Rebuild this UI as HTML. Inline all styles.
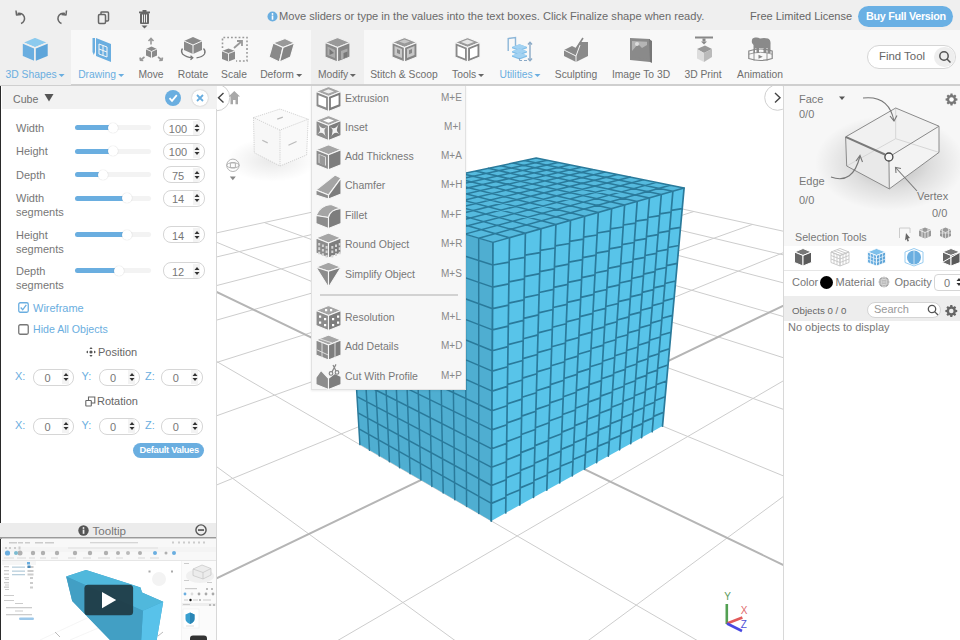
<!DOCTYPE html>
<html><head><meta charset="utf-8">
<style>
*{box-sizing:border-box;margin:0;padding:0}
html,body{width:960px;height:640px;overflow:hidden;background:#fff;font-family:"Liberation Sans",sans-serif;color:#666}
.a{position:absolute}
#top{left:0;top:0;width:960px;height:30px;background:#efefef}
#tb{left:0;top:30px;width:960px;height:56px;background:#f8f8f8;border-bottom:2px solid #cfcfcf}
.lbl{position:absolute;top:39px;font-size:10.3px;color:#6e6e6e;white-space:nowrap;transform:translateX(-50%)}
.blue{color:#6aaee0}
.car{display:inline-block;width:0;height:0;border-left:3px solid transparent;border-right:3px solid transparent;border-top:3px solid #6aaee0;vertical-align:middle;margin-left:-1px}
.car.g{border-top-color:#666}
#lp{left:0;top:86px;width:217px;height:554px;background:#fff;border-right:1px solid #d8d8d8;border-left:1.5px solid #2a2a2a}
.pl{font-size:10.6px;color:#777}
.nv{font-size:10.5px;color:#555}
.xyz{font-size:14.5px;margin-top:-1px}
.blue.t{color:#6aaee0}
.rpt{font-size:11px;color:#a2a2a2}
#vp{left:217px;top:86px;width:566px;height:554px;background:#fff;overflow:hidden}
#rp{left:783px;top:86px;width:177px;height:554px;background:#fff;border-left:1px solid #d8d8d8}
.t{position:absolute;white-space:nowrap;font-size:11px;color:#777}
.sl{position:absolute;height:4px;background:#eee;border-radius:2px}
.sl i{position:absolute;left:0;top:0;height:4px;background:#6aaee0;border-radius:2px}
.sl b{position:absolute;top:-4px;width:12px;height:12px;border-radius:6px;background:#fff;box-shadow:0 0 2px #bbb}
.num{position:absolute;height:17px;border:1px solid #d6d6d6;border-radius:8px;background:#fff;font-size:11px;color:#555}
.num span{position:absolute;top:2px}
.sp{position:absolute;right:3px;top:2px;width:8px;height:11px}
.menu{left:311px;top:85px;width:154px;height:305px;background:#f6f6f6;border:1px solid #ddd;border-top:none}
.mi{font-size:10.5px;color:#777}
.mk{font-size:10px;color:#888}
</style></head><body>
<div id="top" class="a">
<svg class="a" style="left:0;top:1px" width="170" height="32" viewBox="0 0 170 32" fill="none" stroke="#666" stroke-width="1.5">
<path d="M17.5 12.5 A5.2 5.2 0 1 1 21 22.5"/><path d="M16 9.5 L16.5 14 L21 13.5" stroke-linejoin="round"/>
<path d="M65 12.5 A5.2 5.2 0 1 0 61.5 22.5"/><path d="M66.5 9.5 L66 14 L61.5 13.5" stroke-linejoin="round"/>
<rect x="98.5" y="13.5" width="7" height="9" rx="1.2"/><path d="M101 13 V11.5 Q101 11 101.8 11 H107.5 Q108.5 11 108.5 12 V19 Q108.5 20 107.5 20 H106"/>
<g stroke="none" fill="#666"><rect x="140" y="12" width="9" height="11" rx="1"/><rect x="139" y="10.5" width="11" height="1.8"/><rect x="142.5" y="9" width="4" height="2"/><path d="M141.5 24.5 h6 l-3 3z"/></g>
<g stroke="#eee" stroke-width="1"><path d="M142.5 13.5 v8 M144.5 13.5 v8 M146.5 13.5 v8"/></g>
</svg>
<svg class="a" style="left:267;top:11" width="11" height="11" viewBox="0 0 11 11"><circle cx="5.5" cy="5.5" r="5" fill="#6aaee0"/><rect x="4.7" y="4.5" width="1.6" height="4.2" fill="#fff"/><circle cx="5.5" cy="3" r="0.9" fill="#fff"/></svg>
<div class="t" id="info" style="left:279px;top:10px;font-size:11.1px;color:#6a6a6a">Move sliders or type in the values into the text boxes. Click Finalize shape when ready.</div>
<div class="t" id="lic" style="left:750px;top:10px;font-size:11px;color:#666">Free Limited License</div>
<div class="a" style="left:858px;top:6px;width:95px;height:21px;border-radius:11px;background:#6ab0e4"></div>
<div class="t" id="buy" style="left:866px;top:10px;font-size:10.8px;letter-spacing:-0.3px;color:#fff;font-weight:bold">Buy Full Version</div>
</div>
<div id="tb" class="a">
<div class="a" style="left:0;top:0;width:70.5px;height:54.5px;background:#efefef"></div>
<div class="a" style="left:310.5px;top:0;width:53px;height:54px;background:#efefef"></div>
<svg class="a" style="left:0;top:2px" width="960" height="53" viewBox="0 32 960 53">
<!-- 3D shapes cube -->
<g stroke="#efefef" stroke-width="1.6" stroke-linejoin="round">
<path d="M22 42.5 L35 37 L48.5 42.5 L35 48z" fill="#8ccaee"/>
<path d="M22 42.5 L35 48 V62 L22 56.5z" fill="#6aaee0"/>
<path d="M48.5 42.5 L35 48 V62 L48.5 56.5z" fill="#5ea5da"/>
</g>
<!-- drawing -->
<g fill="#6aaee0">
<path d="M96 38 L111 44 V62 L96 56z"/>
<path d="M92.5 38 h2.5 v14 l-1.2 3 l-1.3 -3z"/>
</g>
<g fill="none" stroke="#f7f7f7" stroke-width="1"><path d="M99 44 l8 3 v10 l-8 -3z M99 49 l8 3 M103 45.5 v10"/></g>
<!-- move -->
<g fill="#8a8a8a"><path d="M146 49 L151.5 46.5 L157 49 V55.5 L151.5 58 L146 55.5z"/></g>
<g stroke="#f7f7f7" stroke-width="0.9" fill="none"><path d="M146 49 L151.5 51.5 L157 49 M151.5 51.5 V58"/></g>
<g stroke="#999" stroke-width="1.6" fill="none"><path d="M151 44.5 v-6 M148.5 41 l2.5 -2.5 l2.5 2.5 M144.5 57 l-4 3 M140 57.5 l0.5 2.8 l2.8 0.2 M158 57 l4 3 M162.5 57.5 l-0.5 2.8 l-2.8 0.2"/></g>
<!-- rotate -->
<g fill="#8a8a8a"><path d="M184 41 L193 37 L202 41 V50 L193 54 L184 50z"/></g>
<g stroke="#f8f8f8" stroke-width="1" fill="none"><path d="M184 41 L193 45 L202 41 M193 45 V54"/></g>
<g stroke="#777" stroke-width="1.3" fill="none"><path d="M182.5 48.5 Q180.5 51 182.5 54 Q186.5 57.5 192 57.8 M196.5 57.8 Q202.5 57.2 204.5 54 Q206 51 203.5 48.5"/><path d="M190.5 55.8 l2.3 2 l-2.3 2"/></g>
<!-- scale -->
<g fill="none" stroke="#999" stroke-width="1.6" stroke-dasharray="1.8 2"><path d="M222.5 48 V37.5 H247 V61 H236"/></g>
<g fill="#8a8a8a"><path d="M222 51 L228.5 48.5 L235 51 V59 L228.5 61.5 L222 59z"/></g>
<g stroke="#f7f7f7" stroke-width="0.9" fill="none"><path d="M222 51 L228.5 53.5 L235 51 M228.5 53.5 V61.5"/></g>
<g stroke="#999" stroke-width="1.8" fill="none"><path d="M234 48 l8 -7 M237 41 h5 v5"/></g>
<!-- deform -->
<g fill="#8a8a8a" stroke="#f7f7f7" stroke-width="1.2" stroke-linejoin="round">
<path d="M273 43 L285 38.5 L294.5 43 L283 47.5z" fill="#999"/>
<path d="M273 43 L283 47.5 L279.5 62 L269 57z"/>
<path d="M294.5 43 L283 47.5 L279.5 62 L290.5 57z" fill="#858585"/>
</g>
<!-- modify -->
<g stroke="#efefef" stroke-width="1.2" stroke-linejoin="round">
<path d="M325 42.5 L337.5 37.5 L350 42.5 L337.5 47.5z" fill="#999"/>
<path d="M325 42.5 L337.5 47.5 V62 L325 57z" fill="#8a8a8a"/>
<path d="M350 42.5 L337.5 47.5 V62 L350 57z" fill="#858585"/>
</g>
<g fill="#aaa"><path d="M327.5 46.5 L335 50 V58 L327.5 55z"/><path d="M341 51 L347.5 48.5 V57 L341 59.5z"/></g>
<g fill="#777"><path d="M329.5 49 L334 53 L329.5 55z"/><path d="M343.5 53 L347.5 51.5 V57 L343.5 58.5z"/></g>
<!-- stitch & scoop -->
<g stroke="#f7f7f7" stroke-width="1.2" stroke-linejoin="round">
<path d="M392 42.5 L404.5 37.5 L417 42.5 L404.5 47.5z" fill="#999"/>
<path d="M392 42.5 L404.5 47.5 V62 L392 57z" fill="#8a8a8a"/>
<path d="M417 42.5 L404.5 47.5 V62 L417 57z" fill="#858585"/>
</g>
<g fill="#c8c8c8"><path d="M394.5 46 L402 49 V58 L394.5 55z"/><path d="M407 49 L414.5 46 V55 L407 58z"/><path d="M399 41.5 l5.5 -2 l5.5 2 l-5.5 2z"/></g>
<g fill="#888"><path d="M397 49 l3 1.3 v4 l-3 -1.3z M409 50.3 l3 -1.3 v4 l-3 1.3z"/></g>
<!-- tools -->
<g stroke="#f7f7f7" stroke-width="1.2" stroke-linejoin="round">
<path d="M455 42.5 L467.5 37.5 L480 42.5 L467.5 47.5z" fill="#999"/>
<path d="M455 42.5 L467.5 47.5 V62 L455 57z" fill="#8a8a8a"/>
<path d="M480 42.5 L467.5 47.5 V62 L480 57z" fill="#858585"/>
</g>
<g fill="#fff"><path d="M457.5 46 L465 49 V58.5 L457.5 55.5z"/><path d="M470 49 L477.5 46 V55.5 L470 58.5z"/><path d="M461 42 l6.5 -2.5 l6.5 2.5 l-6.5 2.6z" fill="#e5e5e5"/></g>
<!-- utilities -->
<path d="M508.2 51 V38.5 L515.5 37.5 V49" fill="none" stroke="#8cb6d8" stroke-width="1.4"/>
<path d="M512 47 l7.5 -2.8 l7.5 2.8 v1.3 l-7.5 2.8 l-7.5 -2.8z" fill="#7fbde8"/><path d="M512 47 l7.5 -2.8 l7.5 2.8 l-7.5 2.8z" fill="#a2d2f2"/><path d="M512 51.2 l7.5 -2.8 l7.5 2.8 v1.3 l-7.5 2.8 l-7.5 -2.8z" fill="#7fbde8"/><path d="M512 51.2 l7.5 -2.8 l7.5 2.8 l-7.5 2.8z" fill="#a2d2f2"/><path d="M512 55.4 l7.5 -2.8 l7.5 2.8 v1.3 l-7.5 2.8 l-7.5 -2.8z" fill="#7fbde8"/><path d="M512 55.4 l7.5 -2.8 l7.5 2.8 l-7.5 2.8z" fill="#a2d2f2"/>
<g fill="none" stroke="#8aa9c6" stroke-width="1.4"><path d="M530 43 V60"/><path d="M528 44.5 l2 -2.2 l2 2.2 M528 58.5 l2 2.2 l2 -2.2"/><path d="M519.5 58 v2.5 h2.5 M524 60.5 h3" stroke-width="1"/></g>
<!-- sculpting -->
<g fill="#8a8a8a"><path d="M564 50 L572 46 L576 48 L580 42 L588 42 L588 56 L576 62 L564 56z"/></g>
<g stroke="#f7f7f7" stroke-width="1" fill="none"><path d="M564 50 L576 56 L580 45 M576 56 V62"/></g>
<g stroke="#888" stroke-width="1.6" fill="none"><path d="M570 48 l4 4 l9 -14"/></g>
<!-- image to 3D -->
<g fill="#8a8a8a"><path d="M630 38 L650 39 V62 L630 60z"/></g>
<g fill="#b5b5b5"><path d="M632 41 L647 41.8 V52 L632 51z"/></g>
<g fill="#8a8a8a"><path d="M632 51 L638 44 L642 48 L647 45 V59 L632 57z"/><circle cx="637" cy="44" r="2" fill="#ddd"/></g>
<path d="M649 39 L652 41 V63 L650 62z" fill="#777"/>
<!-- 3D print -->
<g fill="#888"><rect x="695" y="36.5" width="18" height="2"/><rect x="702.5" y="38.5" width="3" height="3"/><path d="M701 41.5 h6 l-3 3z"/></g>
<g fill="#999"><path d="M697 49 L705 45.5 L712 49 L704 53z"/></g>
<g fill="#ddd"><path d="M697 49 L704 53 V62 L697 58.5z"/></g>
<g fill="#bbb"><path d="M712 49 L704 53 V62 L712 57z"/></g>
<!-- animation -->
<path d="M752 43 Q751 38 755 37.5 Q758 37 760 38.5 Q764 37.5 768 38.5 Q771 39.5 770.5 45 V53 H768 V48.5 H766 V53 H763.5 V48 H759 V53 H756.5 V48.5 H755 V53 H753.5 V45z" fill="#8a8a8a"/>
<g fill="none" stroke="#888" stroke-width="1.2"><path d="M748.8 51 Q760.5 47 772.2 51 V58.5 Q760.5 62.5 748.8 58.5z"/><path d="M748.8 54.2 Q760.5 50.5 772.2 54.2" stroke-width="0.8"/><path d="M754 50 V60.5 M767 50 V60.5" stroke-width="0.9"/></g>
<path d="M758.5 54.8 l4.2 2 l-4.2 2z" fill="#888"/>
</svg>
<div class="lbl blue" style="left:35px">3D Shapes <b class="car"></b></div>
<div class="lbl blue" style="left:101px">Drawing <b class="car"></b></div>
<div class="lbl" style="left:151px">Move</div>
<div class="lbl" style="left:193px">Rotate</div>
<div class="lbl" style="left:234px">Scale</div>
<div class="lbl" style="left:281px">Deform <b class="car g"></b></div>
<div class="lbl" style="left:337px">Modify <b class="car g"></b></div>
<div class="lbl" style="left:404px">Stitch &amp; Scoop</div>
<div class="lbl" style="left:468px">Tools <b class="car g"></b></div>
<div class="lbl blue" style="left:520px">Utilities <b class="car"></b></div>
<div class="lbl" style="left:576px">Sculpting</div>
<div class="lbl" style="left:641px">Image To 3D</div>
<div class="lbl" style="left:703px">3D Print</div>
<div class="lbl" style="left:760px">Animation</div>
<div class="a" style="left:867px;top:15px;width:89px;height:24px;border:1px solid #d5d5d5;border-radius:12px;background:#fff"></div>
<div class="t" style="left:879px;top:20px;font-size:11.4px;color:#666">Find Tool</div>
<div class="a" style="left:933.5px;top:17px;width:21px;height:20px;border-radius:10px;background:#eee"></div>
<svg class="a" style="left:937.5px;top:20px" width="14" height="14" viewBox="0 0 14 14" fill="none" stroke="#555" stroke-width="1.5"><circle cx="6" cy="6" r="4.2"/><path d="M9 9 L12.5 12.5"/></svg>
</div>
<div id="lp" class="a"></div>
<div id="lpc"><div class="a" style="left:1.5px;top:86px;width:215px;height:23px;background:#f2f2f2"></div><div class="t" id="cube" style="left:13px;top:92.5px;font-size:10.6px;color:#707070">Cube</div><svg class="a" style="left:44px;top:93px" width="10" height="9" viewBox="0 0 10 9"><path d="M0.5 1 H9.5 L5 8.5z" fill="#555"/></svg><div class="a" style="left:164.5px;top:89.5px;width:16px;height:16px;border-radius:8px;background:#6aaee0"></div><svg class="a" style="left:164.5px;top:89.5px" width="16" height="16" viewBox="0 0 16 16"><path d="M4.5 8.2 L7 10.8 L11.8 5.2" fill="none" stroke="#fff" stroke-width="1.8"/></svg><div class="a" style="left:192px;top:89.5px;width:16px;height:16px;border-radius:8px;background:#fff;box-shadow:0 0 1.5px rgba(0,0,0,.3)"></div><svg class="a" style="left:192px;top:89.5px" width="16" height="16" viewBox="0 0 16 16"><path d="M5 5 L11 11 M11 5 L5 11" fill="none" stroke="#6aaee0" stroke-width="1.8"/></svg><div class="t pl" style="left:16px;top:121.5px">Width</div><div class="a" style="left:75px;top:125.0px;width:76px;height:5px;border-radius:3px;background:#f3f3f3"></div><div class="a" style="left:75px;top:125.0px;width:38px;height:5px;border-radius:3px;background:#6aaee0"></div><div class="a" style="left:108.0px;top:122.5px;width:10px;height:10px;border-radius:5px;background:#fff;box-shadow:0 0 1.2px rgba(0,0,0,.2)"></div><div class="num" style="left:163px;top:119.0px;width:42px;height:17px"></div><div class="a" style="left:193px;top:120.5px;width:7px;height:14px;background:#f3f3f3"></div><svg class="a" style="left:193px;top:121.5px" width="8" height="12" viewBox="0 0 8 12"><path d="M1.5 5 L4 2 L6.5 5z M1.5 7 L4 10 L6.5 7z" fill="#333"/></svg><div class="t nv" style="left:163px;width:30px;top:122.5px;text-align:center">100</div><div class="t pl" style="left:16px;top:145.3px">Height</div><div class="a" style="left:75px;top:148.8px;width:76px;height:5px;border-radius:3px;background:#f3f3f3"></div><div class="a" style="left:75px;top:148.8px;width:38px;height:5px;border-radius:3px;background:#6aaee0"></div><div class="a" style="left:108.0px;top:146.3px;width:10px;height:10px;border-radius:5px;background:#fff;box-shadow:0 0 1.2px rgba(0,0,0,.2)"></div><div class="num" style="left:163px;top:142.8px;width:42px;height:17px"></div><div class="a" style="left:193px;top:144.3px;width:7px;height:14px;background:#f3f3f3"></div><svg class="a" style="left:193px;top:145.3px" width="8" height="12" viewBox="0 0 8 12"><path d="M1.5 5 L4 2 L6.5 5z M1.5 7 L4 10 L6.5 7z" fill="#333"/></svg><div class="t nv" style="left:163px;width:30px;top:146.3px;text-align:center">100</div><div class="t pl" style="left:16px;top:168.8px">Depth</div><div class="a" style="left:75px;top:172.3px;width:76px;height:5px;border-radius:3px;background:#f3f3f3"></div><div class="a" style="left:75px;top:172.3px;width:28px;height:5px;border-radius:3px;background:#6aaee0"></div><div class="a" style="left:98.0px;top:169.8px;width:10px;height:10px;border-radius:5px;background:#fff;box-shadow:0 0 1.2px rgba(0,0,0,.2)"></div><div class="num" style="left:163px;top:166.3px;width:42px;height:17px"></div><div class="a" style="left:193px;top:167.8px;width:7px;height:14px;background:#f3f3f3"></div><svg class="a" style="left:193px;top:168.8px" width="8" height="12" viewBox="0 0 8 12"><path d="M1.5 5 L4 2 L6.5 5z M1.5 7 L4 10 L6.5 7z" fill="#333"/></svg><div class="t nv" style="left:163px;width:30px;top:169.8px;text-align:center">75</div><div class="t pl" style="left:16px;top:192.3px">Width</div><div class="t pl" style="left:16px;top:206.3px">segments</div><div class="a" style="left:75px;top:195.8px;width:76px;height:5px;border-radius:3px;background:#f3f3f3"></div><div class="a" style="left:75px;top:195.8px;width:51.5px;height:5px;border-radius:3px;background:#6aaee0"></div><div class="a" style="left:121.5px;top:193.3px;width:10px;height:10px;border-radius:5px;background:#fff;box-shadow:0 0 1.2px rgba(0,0,0,.2)"></div><div class="num" style="left:163px;top:189.8px;width:42px;height:17px"></div><div class="a" style="left:193px;top:191.3px;width:7px;height:14px;background:#f3f3f3"></div><svg class="a" style="left:193px;top:192.3px" width="8" height="12" viewBox="0 0 8 12"><path d="M1.5 5 L4 2 L6.5 5z M1.5 7 L4 10 L6.5 7z" fill="#333"/></svg><div class="t nv" style="left:163px;width:30px;top:193.3px;text-align:center">14</div><div class="t pl" style="left:16px;top:228.6px">Height</div><div class="t pl" style="left:16px;top:242.6px">segments</div><div class="a" style="left:75px;top:232.1px;width:76px;height:5px;border-radius:3px;background:#f3f3f3"></div><div class="a" style="left:75px;top:232.1px;width:51.5px;height:5px;border-radius:3px;background:#6aaee0"></div><div class="a" style="left:121.5px;top:229.6px;width:10px;height:10px;border-radius:5px;background:#fff;box-shadow:0 0 1.2px rgba(0,0,0,.2)"></div><div class="num" style="left:163px;top:226.1px;width:42px;height:17px"></div><div class="a" style="left:193px;top:227.6px;width:7px;height:14px;background:#f3f3f3"></div><svg class="a" style="left:193px;top:228.6px" width="8" height="12" viewBox="0 0 8 12"><path d="M1.5 5 L4 2 L6.5 5z M1.5 7 L4 10 L6.5 7z" fill="#333"/></svg><div class="t nv" style="left:163px;width:30px;top:229.6px;text-align:center">14</div><div class="t pl" style="left:16px;top:264.6px">Depth</div><div class="t pl" style="left:16px;top:278.6px">segments</div><div class="a" style="left:75px;top:268.1px;width:76px;height:5px;border-radius:3px;background:#f3f3f3"></div><div class="a" style="left:75px;top:268.1px;width:43.7px;height:5px;border-radius:3px;background:#6aaee0"></div><div class="a" style="left:113.7px;top:265.6px;width:10px;height:10px;border-radius:5px;background:#fff;box-shadow:0 0 1.2px rgba(0,0,0,.2)"></div><div class="num" style="left:163px;top:262.1px;width:42px;height:17px"></div><div class="a" style="left:193px;top:263.6px;width:7px;height:14px;background:#f3f3f3"></div><svg class="a" style="left:193px;top:264.6px" width="8" height="12" viewBox="0 0 8 12"><path d="M1.5 5 L4 2 L6.5 5z M1.5 7 L4 10 L6.5 7z" fill="#333"/></svg><div class="t nv" style="left:163px;width:30px;top:265.6px;text-align:center">12</div><svg class="a" style="left:17.5px;top:302px" width="11" height="11" viewBox="0 0 11 11"><rect x="0.75" y="0.75" width="9.5" height="9.5" rx="1.5" fill="#fff" stroke="#6aaee0" stroke-width="1.3"/><path d="M2.7 5.5 L4.7 7.8 L8.3 2.8" fill="none" stroke="#6aaee0" stroke-width="1.3"/></svg><div class="t blue" id="wf" style="left:33px;top:301.8px">Wireframe</div><svg class="a" style="left:17.5px;top:324px" width="11" height="11" viewBox="0 0 11 11"><rect x="0.75" y="0.75" width="9.5" height="9.5" rx="1.5" fill="#fff" stroke="#777" stroke-width="1.3"/></svg><div class="t blue" id="hao" style="left:33px;top:323px;font-size:10.6px">Hide All Objects</div><svg class="a" style="left:85.5px;top:347px" width="10" height="10" viewBox="0 0 10 10" fill="#555"><circle cx="5" cy="5" r="1.6"/><path d="M5 0 L6.6 2 H3.4z M5 10 L6.6 8 H3.4z M0 5 L2 3.4 V6.6z M10 5 L8 3.4 V6.6z"/></svg><div class="t" id="pos" style="left:98px;top:346px;color:#666">Position</div><svg class="a" style="left:85px;top:396px" width="11" height="11" viewBox="0 0 11 11" fill="none" stroke="#666" stroke-width="1.1"><rect x="0.8" y="4.5" width="5.5" height="5.5" rx="0.5"/><path d="M3.5 4.5 V1 H9.8 V7 H6.3"/></svg><div class="t" id="rot" style="left:97px;top:395px;color:#666">Rotation</div><div class="t blue xyz" style="left:15px;top:371.1px">X:</div><div class="t blue xyz" style="left:81.5px;top:371.1px">Y:</div><div class="t blue xyz" style="left:145px;top:371.1px">Z:</div><div class="num" style="left:33px;top:368.6px;width:41px;height:17px"></div><div class="a" style="left:62px;top:370.1px;width:7px;height:14px;background:#f3f3f3"></div><svg class="a" style="left:62px;top:371.1px" width="8" height="12" viewBox="0 0 8 12"><path d="M1.5 5 L4 2 L6.5 5z M1.5 7 L4 10 L6.5 7z" fill="#333"/></svg><div class="t nv" style="left:33px;width:29px;top:372.1px;text-align:center">0</div><div class="num" style="left:98.5px;top:368.6px;width:41.0px;height:17px"></div><div class="a" style="left:127.5px;top:370.1px;width:7px;height:14px;background:#f3f3f3"></div><svg class="a" style="left:127.5px;top:371.1px" width="8" height="12" viewBox="0 0 8 12"><path d="M1.5 5 L4 2 L6.5 5z M1.5 7 L4 10 L6.5 7z" fill="#333"/></svg><div class="t nv" style="left:98.5px;width:29.0px;top:372.1px;text-align:center">0</div><div class="num" style="left:161px;top:368.6px;width:41.5px;height:17px"></div><div class="a" style="left:190.5px;top:370.1px;width:7px;height:14px;background:#f3f3f3"></div><svg class="a" style="left:190.5px;top:371.1px" width="8" height="12" viewBox="0 0 8 12"><path d="M1.5 5 L4 2 L6.5 5z M1.5 7 L4 10 L6.5 7z" fill="#333"/></svg><div class="t nv" style="left:161px;width:29.5px;top:372.1px;text-align:center">0</div><div class="t blue xyz" style="left:15px;top:420.4px">X:</div><div class="t blue xyz" style="left:81.5px;top:420.4px">Y:</div><div class="t blue xyz" style="left:145px;top:420.4px">Z:</div><div class="num" style="left:33px;top:417.9px;width:41px;height:17px"></div><div class="a" style="left:62px;top:419.4px;width:7px;height:14px;background:#f3f3f3"></div><svg class="a" style="left:62px;top:420.4px" width="8" height="12" viewBox="0 0 8 12"><path d="M1.5 5 L4 2 L6.5 5z M1.5 7 L4 10 L6.5 7z" fill="#333"/></svg><div class="t nv" style="left:33px;width:29px;top:421.4px;text-align:center">0</div><div class="num" style="left:98.5px;top:417.9px;width:41.0px;height:17px"></div><div class="a" style="left:127.5px;top:419.4px;width:7px;height:14px;background:#f3f3f3"></div><svg class="a" style="left:127.5px;top:420.4px" width="8" height="12" viewBox="0 0 8 12"><path d="M1.5 5 L4 2 L6.5 5z M1.5 7 L4 10 L6.5 7z" fill="#333"/></svg><div class="t nv" style="left:98.5px;width:29.0px;top:421.4px;text-align:center">0</div><div class="num" style="left:161px;top:417.9px;width:41.5px;height:17px"></div><div class="a" style="left:190.5px;top:419.4px;width:7px;height:14px;background:#f3f3f3"></div><svg class="a" style="left:190.5px;top:420.4px" width="8" height="12" viewBox="0 0 8 12"><path d="M1.5 5 L4 2 L6.5 5z M1.5 7 L4 10 L6.5 7z" fill="#333"/></svg><div class="t nv" style="left:161px;width:29.5px;top:421.4px;text-align:center">0</div><div class="a" style="left:132.5px;top:443px;width:71.5px;height:14.5px;border-radius:7.5px;background:#6aaee0"></div><div class="t" id="dv" style="left:139.5px;top:444.5px;color:#fff;font-weight:bold;font-size:9.3px;letter-spacing:-0.3px">Default Values</div><div class="a" style="left:0;top:522.5px;width:216px;height:15px;background:#ececec"></div><div class="a" style="left:0;top:537px;width:216px;height:1.5px;background:#9a9a9a"></div><svg class="a" style="left:77.5px;top:524.5px" width="11" height="11" viewBox="0 0 11 11"><circle cx="5.5" cy="5.5" r="5.2" fill="#555"/><rect x="4.7" y="4.6" width="1.7" height="4.2" fill="#ececec"/><circle cx="5.5" cy="3" r="0.95" fill="#ececec"/></svg><div class="t" id="ttl" style="left:92.5px;top:523.5px;font-size:11.6px;color:#777">Tooltip</div><svg class="a" style="left:194.5px;top:524px" width="12" height="12" viewBox="0 0 12 12"><circle cx="6" cy="6" r="5.1" fill="none" stroke="#555" stroke-width="1.4"/><rect x="3" y="5.2" width="6" height="1.7" fill="#555"/></svg><svg class="a" style="left:0;top:0" width="216" height="640" viewBox="0 0 216 640">
<rect x="2" y="538.5" width="214" height="102" fill="#fff"/>
<rect x="2" y="539" width="214" height="8" fill="#f8f8f8"/>
<rect x="2" y="547" width="214" height="5" fill="#f4f4f4"/>
<rect x="2" y="552" width="214" height="8.5" fill="#f8f8f8"/>
<rect x="2" y="560" width="214" height="0.7" fill="#ddd"/>
<g fill="#ccc"><rect x="9" y="542" width="8" height="1.5"/><rect x="18" y="542" width="5" height="1.5"/><rect x="25" y="542" width="5" height="1.5"/><rect x="35" y="542" width="8" height="1.5"/><rect x="45" y="542" width="9" height="1.5"/>
<rect x="90" y="542" width="48" height="1.3" fill="#d5d5d5"/><rect x="68" y="547.5" width="90" height="1" fill="#ddd"/>
<rect x="5" y="547" width="2" height="2"/><rect x="9" y="547" width="2" height="2"/><rect x="14" y="547" width="2" height="2"/><rect x="18.5" y="546.5" width="2" height="3"/>
<rect x="172" y="541.5" width="2" height="2"/><rect x="178" y="541.5" width="2" height="2"/><rect x="183" y="541.5" width="2" height="2"/><rect x="188" y="541.5" width="2" height="2"/><rect x="193" y="541.5" width="2" height="2"/><rect x="198" y="541.5" width="2" height="2"/><rect x="203" y="541.5" width="2" height="2"/></g>
<g fill="#b0b0b0"><circle cx="20" cy="553" r="2.5"/><circle cx="33" cy="553" r="2.2"/><circle cx="43" cy="553" r="2.2"/><circle cx="57" cy="553" r="2.2"/><circle cx="75" cy="553" r="2.2"/><circle cx="90" cy="553" r="2.2"/><circle cx="106" cy="553" r="2.2"/><circle cx="118" cy="553" r="2"/><circle cx="128" cy="553" r="2" fill="#bbb"/><circle cx="140" cy="553" r="2"/><circle cx="155" cy="553" r="2" fill="#6aaee0"/><circle cx="166" cy="553" r="1.5"/><circle cx="174" cy="553" r="2" fill="#6aaee0"/></g>
<circle cx="7.5" cy="553" r="2.6" fill="#6aaee0"/><circle cx="16" cy="553" r="2" fill="#7bbbd0"/>
<g fill="#d8d8d8"><rect x="4" y="557.5" width="10" height="1"/><rect x="17" y="557.5" width="9" height="1"/><rect x="29" y="557.5" width="6" height="1"/><rect x="40" y="557.5" width="6" height="1"/><rect x="51" y="557.5" width="7" height="1"/><rect x="68" y="557.5" width="8" height="1"/><rect x="83" y="557.5" width="8" height="1"/><rect x="98" y="557.5" width="12" height="1"/><rect x="116" y="557.5" width="7" height="1"/><rect x="138" y="557.5" width="7" height="1"/><rect x="150" y="557.5" width="9" height="1"/></g>
<!-- mini left panel -->
<rect x="2" y="561" width="34" height="4" fill="#f6f6f6"/>

<g fill="#b9cfdc"><rect x="12" y="566.5" width="13" height="1.3"/><rect x="12" y="570.5" width="13" height="1.3"/><rect x="12" y="574" width="13" height="1.3"/></g>
<g fill="#ccc"><rect x="4" y="566" width="5" height="1.3"/><rect x="4" y="570" width="5" height="1.3"/><rect x="4" y="573.5" width="5" height="1.3"/><rect x="4" y="577" width="5" height="1.3"/><rect x="5" y="579" width="4" height="1"/><rect x="4" y="582" width="5" height="1.3"/><rect x="5" y="584.5" width="4" height="1"/><rect x="4" y="586.5" width="5" height="1.3"/><rect x="5" y="589" width="4" height="1"/>
<rect x="27.5" y="566" width="6" height="2" /><rect x="27.5" y="570" width="6" height="2"/><rect x="27.5" y="573.5" width="6" height="2"/><rect x="30" y="577" width="3" height="2"/><rect x="30" y="582" width="3" height="2"/><rect x="30" y="586.5" width="3" height="2"/>
<rect x="4" y="595" width="10" height="1"/><rect x="4" y="600" width="10" height="1"/><rect x="15" y="603" width="8" height="1"/><rect x="6" y="607" width="26" height="1.3"/><rect x="15" y="610.5" width="8" height="1"/><rect x="6" y="614" width="26" height="1.3"/></g>
<rect x="19" y="617.5" width="15" height="2.5" rx="1.2" fill="#9cc8ea"/>
<rect x="27" y="562" width="3" height="2.5" fill="#6aaee0"/><rect x="27.5" y="565.5" width="3" height="2.5" fill="#4a8ab8"/>
<!-- mini right panel -->
<rect x="181" y="561" width="35" height="80" fill="#fbfbfb"/>
<rect x="181" y="561" width="0.5" height="80" fill="#ececec"/>
<ellipse cx="200" cy="576" rx="14" ry="7" fill="#f0f0f0"/><path d="M193 569 L202 565 L211 568.5 L211 575 L203 579 L193 575.5z" fill="#ececec" stroke="#bdbdbd" stroke-width="0.6"/>
<path d="M193 569 L203 572.5 L211 568.5 M203 572.5 V579" fill="none" stroke="#bdbdbd" stroke-width="0.6"/><rect x="184" y="563" width="5" height="1" fill="#ccc"/><rect x="184" y="580" width="5" height="1" fill="#ccc"/><rect x="207" y="582" width="5" height="1" fill="#ccc"/>
<g fill="#aaa"><rect x="185" y="588" width="12" height="1.2" fill="#ccc"/><circle cx="207" cy="589" r="1"/><circle cx="212" cy="589" r="1"/>
<circle cx="185" cy="594" r="1.4" fill="#6aaee0"/><circle cx="192" cy="594" r="1.4" fill="#ddd"/><circle cx="199" cy="594" r="1.4"/><circle cx="206" cy="594" r="1.4"/><circle cx="213" cy="594" r="1.4"/>
<rect x="184" y="599.5" width="4" height="1" fill="#ccc"/><circle cx="190.5" cy="600" r="1.2" fill="#111"/><rect x="193" y="599.5" width="5" height="1" fill="#ccc"/><circle cx="200" cy="600" r="1" /><rect x="203" y="599.5" width="8" height="1" fill="#ccc"/>
<rect x="182" y="603" width="34" height="3" fill="#eee"/><rect x="183" y="604" width="7" height="1" fill="#ccc"/><circle cx="210" cy="605" r="1"/><circle cx="214" cy="605" r="1"/></g>
<rect x="183" y="609" width="16" height="19" fill="#fff" stroke="#eee" stroke-width="0.6"/>
<path d="M190 612.5 L194.5 614.5 V619 Q194.5 622 190 624 Q185.5 622 185.5 619 V614.5z" fill="#3aa0d0"/>
<path d="M190 612.5 L194.5 614.5 V619 Q194.5 622 190 624z" fill="#2b86b5"/>
<rect x="186" y="625.5" width="8" height="1" fill="#ddd"/>
<rect x="190" y="635.5" width="17" height="8" rx="3" fill="#333"/>
<!-- viewport bits -->
<circle cx="159" cy="579" r="7" fill="#f3f3f3"/>
<g fill="#aaa"><path d="M148.5 570.5 h2 v2 h-2z M171 570.5 h2 v2 h-2z"/></g>
<path d="M40 640 L100 612 M70 640 L150 606" stroke="#eee" stroke-width="0.6"/>
<path d="M55 632 L60 637" stroke="#bbb" stroke-width="1"/><path d="M158 636 L163 632" stroke="#bbb" stroke-width="1"/>
<!-- blue box -->
<path d="M66.2 576.6 L86 570.1 L131.5 584.4 L140.5 587.5 L142 592.5 L163.2 601.8 L156.7 640 L110 640 L72.2 601z" fill="#3f9fc6"/>
<path d="M66.2 576.6 L86 570.1 L131.5 584.4 L140.5 587.5 L142 592.5 L163.2 601.8 L142.9 610.7z" fill="#50b8dc"/>
<path d="M142.9 610.7 L163.2 601.8 L156.7 640 L141.2 640z" fill="#58c2ea"/>
<path d="M66.2 576.6 L142.9 610.7 L141.2 640 L110 640 L72.2 601z" fill="#429fc4"/>
<!-- play button -->
<rect x="84.4" y="584.7" width="48.7" height="30.6" rx="3.5" fill="#1f3a44" fill-opacity="0.93"/>
<path d="M102 592 L116.2 600.1 L102 608.3z" fill="#fff"/>
</svg></div>
<div id="vp" class="a"><svg class="a" style="left:0;top:0" width="566" height="554" viewBox="0 0 566 554"><path d="M206.0,-2531.0L-889.5,340.0M206.0,-2531.0L1536.5,358.8M-579.1,-4236.1L-721.9,303.6M899.5,-4348.5L1352.3,318.2M-5252.9,-14387.1L-578.1,272.4M5953.0,-17592.6L1196.0,283.8M5751.4,9513.0L-453.3,245.3M-3815.7,8008.8L1061.7,254.3M2967.7,3467.2L-344.0,221.5M-1968.0,3166.5L945.2,228.6M2328.5,2078.8L-247.5,200.5M-1498.2,1935.3L843.0,206.1M2044.7,1462.6L-161.6,181.9M-1283.6,1372.9L752.7,186.2M1781.5,890.8L-15.4,150.1M-1081.1,842.0L600.4,152.7M1709.7,734.9L47.2,136.5M-1025.2,695.7L535.6,138.4M1656.8,620.1L104.3,124.1M-984.0,587.6L476.9,125.5M1616.3,532.0L156.3,112.8M-952.2,504.3L423.5,113.8M1584.1,462.2L204.1,102.4M-927.0,438.2L374.6,103.0M1558.1,405.6L248.1,92.9M-906.5,384.5L329.9,93.1M1536.5,358.8L288.7,84.1M-889.5,340.0L288.7,84.1" stroke="#cdcdcd" stroke-width="1" fill="none"/><path d="M1884.5,1114.5L-84.7,165.2M-1160.7,1050.8L672.4,168.6" stroke="#b5b5b5" stroke-width="2" fill="none"/><polygon points="142.9,358.6 274.3,434.9 276.0,156.4 128.1,112.6" fill="#4faed1"/><path d="M142.9,358.6L128.1,112.6M152.5,364.2L138.7,115.7M162.3,369.9L149.6,119.0M172.4,375.7L160.8,122.3M182.6,381.7L172.2,125.7M193.1,387.8L184.0,129.2M203.9,394.0L196.1,132.7M214.9,400.4L208.5,136.4M226.2,407.0L221.2,140.2M237.8,413.7L234.3,144.1M249.6,420.6L247.8,148.1M261.8,427.6L261.7,152.2M274.3,434.9L276.0,156.4M142.0,342.9L274.4,417.4M141.0,326.8L274.5,399.5M140.0,310.6L274.6,381.3M139.0,294.0L274.7,362.8M138.0,277.2L274.8,343.9M137.0,260.1L275.0,324.7M136.0,242.8L275.1,305.1M134.9,225.1L275.2,285.1M133.8,207.1L275.3,264.7M132.7,188.9L275.5,243.9M131.6,170.3L275.6,222.7M130.5,151.4L275.7,201.1M129.3,132.2L275.8,179.0" stroke="#2a7a9b" stroke-width="1.5" fill="none" stroke-linecap="round"/><polygon points="274.3,434.9 445.5,340.1 467.1,102.0 276.0,156.4" fill="#58c4e9"/><path d="M274.3,434.9L276.0,156.4M288.7,426.9L292.5,151.7M302.8,419.1L308.4,147.2M316.5,411.5L323.9,142.8M329.8,404.2L338.9,138.5M342.7,397.0L353.5,134.4M355.3,390.0L367.6,130.3M367.6,383.2L381.3,126.4M379.6,376.6L394.6,122.7M391.3,370.1L407.6,119.0M402.6,363.8L420.2,115.4M413.7,357.7L432.4,111.9M424.6,351.7L444.3,108.5M435.2,345.8L455.9,105.2M445.5,340.1L467.1,102.0M274.4,417.4L288.9,411.3M289.0,409.5L303.1,403.7M303.1,401.9L316.9,396.2M316.9,394.5L330.3,389.0M330.3,387.3L343.3,382.0M343.4,380.3L356.0,375.2M356.1,373.5L368.4,368.5M368.5,366.9L380.4,362.0M380.5,360.4L392.2,355.7M392.3,354.1L403.6,349.5M403.8,347.9L414.8,343.5M414.9,341.9L425.7,337.6M425.8,336.1L436.4,331.9M436.5,330.4L446.7,326.3M274.5,399.5L289.2,393.7M289.2,391.9L303.5,386.2M303.5,384.4L317.4,379.0M317.4,377.2L330.9,371.9M330.9,370.2L344.0,365.1M344.1,363.4L356.8,358.4M356.9,356.7L369.3,351.9M369.4,350.2L381.4,345.6M381.5,343.9L393.3,339.4M393.4,337.8L404.8,333.4M404.9,331.8L416.0,327.5M416.2,325.9L427.0,321.8M427.1,320.2L437.7,316.2M437.8,314.7L448.1,310.8M274.6,381.3L289.4,375.7M289.5,373.9L303.8,368.4M303.9,366.6L317.8,361.4M317.9,359.6L331.5,354.5M331.5,352.8L344.7,347.8M344.8,346.1L357.6,341.3M357.7,339.6L370.2,335.0M370.3,333.3L382.4,328.9M382.5,327.2L394.3,322.9M394.4,321.2L405.9,317.0M406.1,315.4L417.3,311.3M417.4,309.7L428.3,305.7M428.4,304.1L439.1,300.3M439.2,298.7L449.6,295.0M274.7,362.8L289.7,357.4M289.7,355.6L304.2,350.3M304.3,348.5L318.3,343.5M318.4,341.7L332.1,336.8M332.1,335.0L345.4,330.3M345.5,328.5L358.4,324.0M358.5,322.2L371.1,317.8M371.2,316.1L383.4,311.9M383.5,310.1L395.4,306.0M395.5,304.3L407.1,300.3M407.2,298.7L418.5,294.8M418.6,293.1L429.6,289.4M429.8,287.8L440.5,284.1M440.6,282.5L451.0,279.0M274.8,343.9L289.9,338.8M290.0,336.9L304.6,331.9M304.6,330.1L318.9,325.2M318.9,323.4L332.7,318.8M332.8,316.9L346.2,312.5M346.3,310.7L359.3,306.3M359.4,304.6L372.0,300.4M372.1,298.6L384.4,294.6M384.5,292.8L396.5,288.9M396.6,287.2L408.3,283.4M408.4,281.7L419.8,278.0M419.9,276.4L431.0,272.8M431.1,271.1L441.9,267.7M442.0,266.1L452.5,262.7M275.0,324.7L290.2,319.8M290.2,317.9L305.0,313.1M305.0,311.2L319.4,306.7M319.4,304.8L333.3,300.4M333.4,298.6L346.9,294.3M347.0,292.5L360.1,288.4M360.2,286.6L373.0,282.6M373.1,280.8L385.5,277.0M385.6,275.2L397.7,271.5M397.8,269.8L409.5,266.2M409.6,264.5L421.1,261.0M421.2,259.3L432.3,255.9M432.5,254.2L443.3,251.0M443.5,249.3L454.0,246.2M275.1,305.1L290.5,300.4M290.5,298.5L305.4,294.0M305.4,292.1L319.9,287.8M319.9,285.9L334.0,281.7M334.1,279.8L347.7,275.8M347.8,274.0L361.0,270.1M361.1,268.3L373.9,264.5M374.0,262.7L386.5,259.1M386.7,257.3L398.8,253.8M398.9,252.0L410.8,248.7M410.9,246.9L422.4,243.7M422.5,241.9L433.7,238.8M433.9,237.1L444.8,234.0M444.9,232.3L455.6,229.4M275.2,285.1L290.7,280.7M290.7,278.7L305.8,274.5M305.8,272.6L320.4,268.5M320.5,266.6L334.6,262.7M334.7,260.8L348.5,257.0M348.5,255.1L361.9,251.5M362.0,249.6L374.9,246.1M375.0,244.3L387.6,240.9M387.7,239.1L400.0,235.8M400.1,234.0L412.0,230.9M412.1,229.1L423.7,226.1M423.9,224.3L435.1,221.4M435.3,219.6L446.3,216.8M446.4,215.1L457.1,212.3M275.3,264.7L291.0,260.6M291.0,258.6L306.2,254.7M306.3,252.7L321.0,248.9M321.0,246.9L335.3,243.3M335.4,241.3L349.2,237.8M349.3,235.9L362.8,232.5M362.9,230.6L375.9,227.4M376.0,225.5L388.7,222.4M388.8,220.5L401.2,217.5M401.3,215.7L413.3,212.8M413.4,210.9L425.1,208.2M425.2,206.3L436.6,203.7M436.7,201.9L447.8,199.3M447.9,197.5L458.7,195.0M275.5,243.9L291.3,240.1M291.3,238.1L306.6,234.4M306.7,232.4L321.5,228.9M321.6,226.9L336.0,223.5M336.1,221.5L350.0,218.3M350.1,216.3L363.7,213.3M363.8,211.3L376.9,208.3M377.1,206.4L389.8,203.5M390.0,201.6L402.4,198.9M402.5,197.0L414.6,194.4M414.7,192.5L426.5,189.9M426.6,188.1L438.0,185.6M438.2,183.8L449.3,181.5M449.5,179.7L460.3,177.4M275.6,222.7L291.6,219.2M291.6,217.1L307.1,213.8M307.1,211.7L322.1,208.5M322.2,206.5L336.7,203.4M336.8,201.4L350.9,198.4M350.9,196.4L364.6,193.6M364.7,191.6L378.0,188.9M378.1,187.0L391.0,184.4M391.1,182.4L403.6,179.9M403.7,178.0L415.9,175.6M416.0,173.7L427.9,171.4M428.0,169.5L439.5,167.3M439.7,165.5L450.9,163.3M451.0,161.5L461.9,159.5M275.7,201.1L291.8,197.9M291.9,195.8L307.5,192.8M307.5,190.6L322.7,187.7M322.7,185.6L337.4,182.9M337.5,180.8L351.7,178.2M351.8,176.1L365.6,173.6M365.7,171.6L379.0,169.2M379.1,167.2L392.1,164.8M392.3,162.9L404.9,160.6M405.0,158.7L417.3,156.5M417.4,154.6L429.3,152.6M429.5,150.7L441.0,148.7M441.2,146.8L452.5,144.9M452.6,143.1L463.6,141.3M275.8,179.0L292.1,176.2M292.2,174.0L307.9,171.3M308.0,169.1L323.3,166.6M323.3,164.4L338.1,162.0M338.2,159.9L352.5,157.5M352.6,155.4L366.5,153.2M366.6,151.2L380.1,149.0M380.2,147.0L393.3,144.9M393.4,142.9L406.1,141.0M406.3,139.0L418.6,137.1M418.8,135.2L430.8,133.4M430.9,131.5L442.6,129.7M442.7,127.8L454.1,126.2M454.2,124.3L465.3,122.7" stroke="#2a7a9b" stroke-width="1.7" fill="none" stroke-linecap="round"/><polygon points="128.1,112.6 319.2,72.1 467.1,102.0 276.0,156.4" fill="#55bade"/><path d="M128.1,112.6L276.0,156.4M144.2,109.2L292.5,151.7M159.8,105.9L308.4,147.2M175.0,102.7L323.9,142.8M189.9,99.5L338.9,138.5M204.3,96.5L353.5,134.4M218.4,93.5L367.6,130.3M232.1,90.6L381.3,126.4M245.4,87.7L394.6,122.7M258.5,85.0L407.6,119.0M271.2,82.3L420.2,115.4M283.6,79.7L432.4,111.9M295.8,77.1L444.3,108.5M307.6,74.6L455.9,105.2M319.2,72.1L467.1,102.0M128.1,112.6L319.2,72.1M138.7,115.7L330.1,74.3M149.6,119.0L341.2,76.6M160.8,122.3L352.6,78.9M172.2,125.7L364.2,81.2M184.0,129.2L376.0,83.6M196.1,132.7L388.2,86.1M208.5,136.4L400.6,88.6M221.2,140.2L413.3,91.1M234.3,144.1L426.3,93.8M247.8,148.1L439.6,96.4M261.7,152.2L453.2,99.2M276.0,156.4L467.1,102.0" stroke="#2a7a9b" stroke-width="1.5" fill="none" stroke-linecap="round"/></svg></div>
<div id="rp" class="a"></div>
<div id="rpc">
<div class="a" style="left:784px;top:86px;width:176px;height:159.5px;background:#f7f7f7"></div>
<svg class="a" style="left:784px;top:85px" width="176" height="150" viewBox="784 85 176 150">
<defs><radialGradient id="sh" cx="0.5" cy="0.5" r="0.5"><stop offset="0" stop-color="#000" stop-opacity="0.28"/><stop offset="0.55" stop-color="#000" stop-opacity="0.1"/><stop offset="1" stop-color="#000" stop-opacity="0"/></radialGradient></defs>
<ellipse cx="890" cy="163" rx="75" ry="48" fill="url(#sh)"/>
<path d="M845.6 136.9 L895.7 108 L939 126.2 L888.9 157z" fill="#f1f1f1"/>
<path d="M845.6 136.9 L888.9 157 L889.3 188.9 L846.7 166z" fill="#e9e9e9"/>
<path d="M888.9 157 L939 126.2 L939 152.4 L889.3 188.9z" fill="#f3f3f3"/>
<g fill="none" stroke="#d3d3d3" stroke-width="0.9"><path d="M895.7 108 V138.7 L846.7 166 M895.7 138.7 L939 152.4"/></g>
<g fill="none" stroke="#8a8a8a" stroke-width="1"><path d="M845.6 136.9 L895.7 108 L939 126.2 L888.9 157 M845.6 136.9 L846.7 166 L889.3 188.9 L939 152.4 L939 126.2 M888.9 157 L889.3 188.9"/></g>
<path d="M845.6 136.9 L885 154.5" stroke="#7a7a7a" stroke-width="2"/>
<circle cx="888.9" cy="157" r="4" fill="#f7f7f7" stroke="#444" stroke-width="1.3"/>
<g fill="none" stroke="#777" stroke-width="1.1"><path d="M863 98 Q889 95 894 121"/><path d="M890 116 L894 121 L897 115.5"/>
<path d="M831 177 Q853 185 860 156"/><path d="M856 161 L860 155.5 L862.5 162"/>
<path d="M917 191 L896 168"/><path d="M896 173 L895.5 167.5 L901 168.5"/></g>
<path d="M955.93 98.27 L957.41 98.47 L957.41 100.53 L955.93 100.73 L955.50 101.77 L956.41 102.95 L954.95 104.41 L953.77 103.50 L952.73 103.93 L952.53 105.41 L950.47 105.41 L950.27 103.93 L949.23 103.50 L948.05 104.41 L946.59 102.95 L947.50 101.77 L947.07 100.73 L945.59 100.53 L945.59 98.47 L947.07 98.27 L947.50 97.23 L946.59 96.05 L948.05 94.59 L949.23 95.50 L950.27 95.07 L950.47 93.59 L952.53 93.59 L952.73 95.07 L953.77 95.50 L954.95 94.59 L956.41 96.05 L955.50 97.23z" fill="#777"/><circle cx="951.5" cy="99.5" r="2.28" fill="#fff"/>
<path d="M839 96.5 h6 l-3 3.5z" fill="#555"/>
</svg>
<div class="t rpt" style="left:799px;top:93.0px">Face</div>
<div class="t rpt" style="left:799px;top:108.0px">0/0</div>
<div class="t rpt" style="left:799px;top:175.0px">Edge</div>
<div class="t rpt" style="left:799px;top:194.0px">0/0</div>
<div class="t rpt" style="left:917px;top:190.0px">Vertex</div>
<div class="t rpt" style="left:932px;top:207.0px">0/0</div>

<div class="a" style="left:784px;top:270px;width:176px;height:1px;background:#e6e6e6"></div>
<div class="t" id="selt" style="left:795px;top:231px;font-size:10.7px;color:#777">Selection Tools</div>
<svg class="a" style="left:784px;top:222px" width="176" height="50" viewBox="784 222 176 50">
<path d="M899.5 238 V228 H910 V233" fill="none" stroke="#ccc" stroke-width="1"/><path d="M906 233 L910 238 L908 238.5 L909 241 L907.5 241.5 L906.5 239 L905 240.5z" fill="#666"/>
<g fill="#999"><path d="M919 230 L925 227.5 L931 230 V236 L925 238.5 L919 236z"/></g><g stroke="#f6f6f6" stroke-width="0.8" fill="none"><path d="M919 230 L925 232.5 L931 230 M925 232.5 V238.5 M922 229 v8 M928 229 v8"/></g>
<g fill="#999"><path d="M940 230 L945.5 227.5 L951 230 V236 L945.5 238.5 L940 236z"/></g><g stroke="#f6f6f6" stroke-width="0.6" fill="none"><path d="M940 230 L945.5 232.5 L951 230 M945.5 232.5 V238.5 M942.5 229 v8 M948.5 229 v8 M940 233 h11"/></g>
<g stroke="#fff" stroke-width="1" stroke-linejoin="round">
<path d="M794.5 252 L803 248.5 L811.5 252 L803 255.5z" fill="#777"/><path d="M794.5 252 L803 255.5 V266 L794.5 262.5z" fill="#666"/><path d="M811.5 252 L803 255.5 V266 L811.5 262.5z" fill="#5a5a5a"/>
</g>
<g fill="none" stroke="#c5c5c5" stroke-width="0.9"><path d="M831 252 L840 248.5 L849 252 L840 255.5z M831 252 L840 255.5 V266 L831 262.5z M849 252 L840 255.5 V266 L849 262.5z M834 253 v10.5 M837 254.2 v10.5 M843 254.2 v10.5 M846 253 v10.5 M831 255.5 l9 3.5 l9 -3.5 M831 259 l9 3.5 l9 -3.5 M834 250.8 l9 3.5 M837 249.7 l9 3.5"/></g>
<g stroke="#fff" stroke-width="0.8"><path d="M867.5 252 L876.5 248.5 L885.5 252 L876.5 255.5z" fill="#7fc0ea"/><path d="M867.5 252 L876.5 255.5 V266 L867.5 262.5z" fill="#6aaee0"/><path d="M885.5 252 L876.5 255.5 V266 L885.5 262.5z" fill="#5fa5d8"/></g>
<g fill="none" stroke="#eaf4fb" stroke-width="0.7"><path d="M870.5 253.2 v10.5 M873.5 254.4 v10.5 M879.5 254.4 v10.5 M882.5 253.2 v10.5 M867.5 255.5 l9 3.5 l9 -3.5 M867.5 259 l9 3.5 l9 -3.5"/></g>
<path d="M905 252 L914 248.5 L923 252 V262.5 L914 266 L905 262.5z" fill="none" stroke="#8cc6ee" stroke-width="0.9"/>
<circle cx="914" cy="257.5" r="7" fill="#6aaee0"/><path d="M914 250.5 V264.5" stroke="#fff" stroke-width="0.6"/>
<g stroke="#fff" stroke-width="1" stroke-linejoin="round"><path d="M942.5 252 L951 248.5 L960 252 L951 255.5z" fill="#777"/><path d="M942.5 252 L951 255.5 V266 L942.5 262.5z" fill="#666"/><path d="M960 252 L951 255.5 V266 L960 262.5z" fill="#5a5a5a"/></g><path d="M943 262 L959.5 252.5" stroke="#fff" stroke-width="1"/></svg>
<div class="t" id="colt" style="left:792px;top:275.5px;font-size:11px;color:#777">Color</div>
<div class="a" style="left:820px;top:275.5px;width:13px;height:13px;border-radius:7px;background:#000"></div>
<div class="t" id="matt" style="left:835.5px;top:275.5px;font-size:11px;color:#777">Material</div>
<svg class="a" style="left:878px;top:276px" width="12" height="12" viewBox="0 0 12 12"><circle cx="6" cy="6" r="5.3" fill="#9a9a9a"/><g fill="none" stroke="#e8e8e8" stroke-width="0.75"><path d="M1 4.3 Q6 2.8 11 4.3 M0.8 6 H11.2 M1 7.7 Q6 9.2 11 7.7"/><ellipse cx="6" cy="6" rx="2.2" ry="5.3"/><path d="M6 0.7 V11.3"/></g></svg>
<div class="t" id="opt" style="left:894.5px;top:275.5px;font-size:11px;color:#777">Opacity</div>
<div class="a" style="left:934px;top:274px;width:30px;height:17px;border:1px solid #d6d6d6;border-radius:4px;background:#fff"></div>
<div class="t nv" style="left:944px;top:276.5px">0</div>
<svg class="a" style="left:955px;top:276px" width="8" height="12" viewBox="0 0 8 12"><path d="M1.5 5 L4 2 L6.5 5z M1.5 7 L4 10 L6.5 7z" fill="#333"/></svg>
<div class="a" style="left:784px;top:296px;width:176px;height:24.5px;background:#ededed"></div>
<div class="t" id="objt" style="left:792px;top:305px;font-size:9.7px;color:#666">Objects 0 / 0</div>
<div class="a" style="left:866.5px;top:301.5px;width:74px;height:16px;border:1px solid #d4d4d4;border-radius:8px;background:#fff"></div>
<div class="t" id="srch" style="left:874px;top:303px;font-size:11px;color:#999">Search</div>
<svg class="a" style="left:927px;top:303.5px" width="12" height="12" viewBox="0 0 12 12" fill="none" stroke="#555" stroke-width="1.3"><circle cx="5" cy="5" r="3.7"/><path d="M7.6 7.6 L11 11"/></svg>
<svg class="a" style="left:940px;top:300px" width="20" height="22" viewBox="940 300 20 22"><path d="M955.73 309.77 L957.21 309.97 L957.21 312.03 L955.73 312.23 L955.30 313.27 L956.21 314.45 L954.75 315.91 L953.57 315.00 L952.53 315.43 L952.33 316.91 L950.27 316.91 L950.07 315.43 L949.03 315.00 L947.85 315.91 L946.39 314.45 L947.30 313.27 L946.87 312.23 L945.39 312.03 L945.39 309.97 L946.87 309.77 L947.30 308.73 L946.39 307.55 L947.85 306.09 L949.03 307.00 L950.07 306.57 L950.27 305.09 L952.33 305.09 L952.53 306.57 L953.57 307.00 L954.75 306.09 L956.21 307.55 L955.30 308.73z" fill="#666"/><circle cx="951.3" cy="311" r="2.28" fill="#ededed"/></svg>
<div class="t" id="noobj" style="left:788px;top:321px;font-size:11px;color:#777">No objects to display</div>
</div>
<div id="vpo" class="a" style="left:217px;top:86px;width:566.5px;height:554px;overflow:hidden">
<svg class="a" style="left:0;top:0" width="566" height="554" viewBox="217 86 566 554">
<defs><radialGradient id="vcs" cx="0.5" cy="0.5" r="0.5"><stop offset="0" stop-color="#000" stop-opacity="0.09"/><stop offset="1" stop-color="#000" stop-opacity="0"/></radialGradient></defs>
<ellipse cx="272" cy="160" rx="45" ry="22" fill="url(#vcs)"/>
<path d="M253.5 117.6 L280 109 L308.2 119.2 L280 130.1z" fill="#fafafa"/>
<path d="M253.5 117.6 L280 130.1 L280 166 L254.3 152.75z" fill="#f7f7f7"/>
<path d="M280 130.1 L308.2 119.2 L306.6 155 L280 166z" fill="#f9f9f9"/>
<g fill="none" stroke="#c8c8c8" stroke-width="0.8" stroke-dasharray="1.2 1"><path d="M253.5 117.6 L280 109 L308.2 119.2 L280 130.1z M253.5 117.6 L254.3 152.75 L280 166 L306.6 155 L308.2 119.2 M280 130.1 V166"/></g>
<g fill="#bbb"><rect x="277" y="117.5" width="6" height="1.2" transform="rotate(-20 280 118)"/><rect x="262" y="141" width="6" height="1.2" transform="rotate(25 265 141.5)"/><rect x="288" y="143" width="9" height="1.2" transform="rotate(-25 292 143.5)"/></g>
<circle cx="216.5" cy="97.5" r="13.3" fill="#fff" stroke="#d0d0d0" stroke-width="1"/>
<path d="M223.5 93 L218.5 97.7 L223.5 102.4" fill="none" stroke="#444" stroke-width="1.4"/>
<path d="M234.3 91 L240 96.5 H238 V104.3 H235.5 V100 H233 V104.3 H230.5 V96.5 H228.6z" fill="#a8a8a8"/>
<g fill="none" stroke="#aaa" stroke-width="0.9"><circle cx="232.9" cy="165.3" r="6.2"/><ellipse cx="232.9" cy="165.3" rx="6.2" ry="2.6"/><rect x="230.4" y="162.8" width="5" height="5" rx="0.6"/></g>
<path d="M229.8 176.5 h6 l-3 3.8z" fill="#888"/>
<circle cx="777.5" cy="97.5" r="12.8" fill="#fff" stroke="#d0d0d0" stroke-width="1"/>
<path d="M775 93 L780 97.7 L775 102.4" fill="none" stroke="#444" stroke-width="1.4"/>
<g stroke-width="2.6" stroke-linecap="butt"><path d="M726.8 624 V604" stroke="#53a053"/><path d="M727 623.5 L742.4 617.5" stroke="#e25a5a"/><path d="M727 623.5 L742 631" stroke="#4848e0"/></g>
<g font-family="Liberation Sans" font-size="10" text-anchor="middle"><text x="727.6" y="600" fill="#5a9a5a">Y</text><text x="744" y="614" fill="#e06a6a">X</text><text x="743.8" y="627.5" fill="#5050d8">Z</text></g>
</svg>
</div>
<div id="menu">
<div class="a" style="left:311px;top:86px;width:154.5px;height:304px;background:#f7f7f7;border:1px solid #e2e2e2;border-top:none;box-shadow:0 1px 2px rgba(0,0,0,.08)"></div>
<svg class="a" style="left:0;top:1.5px" width="470" height="395" viewBox="0 0 470 395"><g stroke="#f7f7f7" stroke-width="1.1" stroke-linejoin="round"><path d="M316 89.4 L328.5 84.4 L341 89.4 L328.5 94.4z" fill="#a5a5a5"/><path d="M316 89.4 L328.5 94.4 L328.5 109.4 L316 104.4z" fill="#8c8c8c"/><path d="M341 89.4 L328.5 94.4 L328.5 109.4 L341 104.4z" fill="#7d7d7d"/></g><path d="M318.4 93.2 L326.1 96.3 L326.1 105.6 L318.4 102.5zM330.9 96.3 L338.6 93.2 L338.6 102.5 L330.9 105.6z" fill="#fff"/><path d="M323 89.4 L328.5 87.2 L334 89.4 L328.5 91.60000000000001z" fill="#eee"/><g stroke="#f7f7f7" stroke-width="1.1" stroke-linejoin="round"><path d="M316 118.6 L328.5 113.6 L341 118.6 L328.5 123.6z" fill="#a5a5a5"/><path d="M316 118.6 L328.5 123.6 L328.5 138.6 L316 133.6z" fill="#8c8c8c"/><path d="M341 118.6 L328.5 123.6 L328.5 138.6 L341 133.6z" fill="#7d7d7d"/></g><path d="M317.2 120.6 Q322.2 129.5 327.2 124.6 Q321.5 128.3 327.2 136.6 Q322.2 127.7 317.2 132.6 Q323.0 128.9 317.2 120.6z M329.8 124.6 Q334.8 129.5 339.8 120.6 Q334.0 128.9 339.8 132.6 Q334.8 127.7 329.8 136.6 Q335.5 128.3 329.8 124.6z" fill="#f2f2f2"/><path d="M323 118.6 L328.5 116.39999999999999 L334 118.6 L328.5 120.8z" fill="#fff"/><g stroke="#f7f7f7" stroke-width="1.1" stroke-linejoin="round"><path d="M316 147.8 L328.5 142.8 L341 147.8 L328.5 152.8z" fill="#a5a5a5"/><path d="M316 147.8 L328.5 152.8 L328.5 167.8 L316 162.8z" fill="#8c8c8c"/><path d="M341 147.8 L328.5 152.8 L328.5 167.8 L341 162.8z" fill="#7d7d7d"/></g><path d="M318.5 151.8 L326.0 154.8 L326.0 163.8 L318.5 160.8z" fill="#ddd"/><path d="M319.5 152.8 L325 155.3 V163.8 L319.5 161.3z" fill="#999"/><g stroke="#f7f7f7" stroke-width="1.1" stroke-linejoin="round"><path d="M316 188.1 L335 173.1 L341 176.1 L328.5 193.1z" fill="#a5a5a5"/><path d="M316 188.1 L328.5 193.1 V197.1 L316 193.1z" fill="#8c8c8c"/><path d="M341 176.1 L328.5 193.1 V197.1 L341 192.1z" fill="#7d7d7d"/></g><g stroke="#f7f7f7" stroke-width="1.1" stroke-linejoin="round"><path d="M316 213.5 Q320 203.5 331 202.5 L341 206.5 Q330 207.5 328.5 215.5z" fill="#a5a5a5"/><path d="M316 213.5 L328.5 215.5 V226.5 L316 221.5z" fill="#8c8c8c"/><path d="M341 206.5 Q330 207.5 328.5 215.5 V226.5 L341 221.5z" fill="#7d7d7d"/></g><g stroke="#f7f7f7" stroke-width="1.1" stroke-linejoin="round"><path d="M316 235.9 L328.5 230.9 L341 235.9 L328.5 240.9z" fill="#a5a5a5"/><path d="M316 235.9 L328.5 240.9 L328.5 255.9 L316 250.9z" fill="#8c8c8c"/><path d="M341 235.9 L328.5 240.9 L328.5 255.9 L341 250.9z" fill="#7d7d7d"/></g><path d="M318.2 240.9 h2 v2.6 h-2z M331.3 244.1 h2 v2.6 h-2z M318.2 245.3 h2 v2.6 h-2z M331.3 248.5 h2 v2.6 h-2z M318.2 249.70000000000002 h2 v2.6 h-2z M331.3 252.9 h2 v2.6 h-2z M321.9 242.5 h2 v2.6 h-2z M335.0 242.5 h2 v2.6 h-2z M321.9 246.9 h2 v2.6 h-2z M335.0 246.9 h2 v2.6 h-2z M321.9 251.3 h2 v2.6 h-2z M335.0 251.3 h2 v2.6 h-2z M325.59999999999997 244.1 h2 v2.6 h-2z M338.7 240.9 h2 v2.6 h-2z M325.59999999999997 248.5 h2 v2.6 h-2z M338.7 245.3 h2 v2.6 h-2z M325.59999999999997 252.9 h2 v2.6 h-2z M338.7 249.70000000000002 h2 v2.6 h-2z " fill="#d5d5d5"/><g stroke="#f7f7f7" stroke-width="1.1" stroke-linejoin="round"><path d="M316 265.3 L328.5 260.3 L341 265.3 L328.5 269.3z" fill="#a5a5a5"/><path d="M316 265.3 L328.5 269.3 V285.3z" fill="#8c8c8c"/><path d="M341 265.3 L328.5 269.3 V285.3z" fill="#7d7d7d"/></g><g stroke="#f7f7f7" stroke-width="1.1" stroke-linejoin="round"><path d="M316 308.4 L328.5 303.4 L341 308.4 L328.5 313.4z" fill="#a5a5a5"/><path d="M316 308.4 L328.5 313.4 L328.5 328.4 L316 323.4z" fill="#8c8c8c"/><path d="M341 308.4 L328.5 313.4 L328.5 328.4 L341 323.4z" fill="#7d7d7d"/></g><path d="M319 313.4 h2.2 v2.4 h-2.2z M324 315.9 h2.2 v2.4 h-2.2z M319 319.4 h2.2 v2.4 h-2.2z M324 321.9 h2.2 v2.4 h-2.2z M332 315.9 h2.2 v2.4 h-2.2z M337 313.4 h2.2 v2.4 h-2.2z M332 321.9 h2.2 v2.4 h-2.2z M337 319.4 h2.2 v2.4 h-2.2z M325 306.9 h2.2 v2.4 h-2.2z M330 306.9 h2.2 v2.4 h-2.2z " fill="#fff"/><g stroke="#f7f7f7" stroke-width="1.1" stroke-linejoin="round"><path d="M316 337.9 L328.5 332.9 L341 337.9 L328.5 342.9z" fill="#a5a5a5"/><path d="M316 337.9 L328.5 342.9 L328.5 357.9 L316 352.9z" fill="#8c8c8c"/><path d="M341 337.9 L328.5 342.9 L328.5 357.9 L341 352.9z" fill="#7d7d7d"/></g><path d="M322 340.9 V355.4 M335 340.9 V355.4 M317 347.9 L328 352.9 M320 336.9 L332 340.9" stroke="#e5e5e5" stroke-width="0.9"/><g stroke="#f7f7f7" stroke-width="1.1" stroke-linejoin="round"><path d="M316 375.4 L321 368.4 L328.5 376.4 V387.4 L316 382.4z" fill="#8c8c8c"/><path d="M328.5 376.4 L335 371.4 L341 374.4 V382.4 L328.5 387.4z" fill="#7d7d7d"/></g><g fill="none" stroke="#888" stroke-width="1.2"><circle cx="331" cy="371.4" r="1.8"/><circle cx="337" cy="370.4" r="1.8"/><path d="M332 369.9 L336 362.4 M336 368.9 L333 362.9"/></g></svg>
<div class="a" style="left:319.5px;top:294px;width:138px;height:1.5px;background:#d2d2d2"></div>
<div class="t mi" style="left:345px;top:91.6px">Extrusion</div><div class="t mk" style="left:441px;width:20px;text-align:right;top:91.7px">M+E</div>
<div class="t mi" style="left:345px;top:120.8px">Inset</div><div class="t mk" style="left:441px;width:20px;text-align:right;top:120.9px">M+I</div>
<div class="t mi" style="left:345px;top:150.0px">Add Thickness</div><div class="t mk" style="left:441px;width:20px;text-align:right;top:150.1px">M+A</div>
<div class="t mi" style="left:345px;top:179.3px">Chamfer</div><div class="t mk" style="left:441px;width:20px;text-align:right;top:179.4px">M+H</div>
<div class="t mi" style="left:345px;top:208.7px">Fillet</div><div class="t mk" style="left:441px;width:20px;text-align:right;top:208.8px">M+F</div>
<div class="t mi" style="left:345px;top:238.1px">Round Object</div><div class="t mk" style="left:441px;width:20px;text-align:right;top:238.2px">M+R</div>
<div class="t mi" style="left:345px;top:267.5px">Simplify Object</div><div class="t mk" style="left:441px;width:20px;text-align:right;top:267.6px">M+S</div>
<div class="t mi" style="left:345px;top:310.6px">Resolution</div><div class="t mk" style="left:441px;width:20px;text-align:right;top:310.7px">M+L</div>
<div class="t mi" style="left:345px;top:340.1px">Add Details</div><div class="t mk" style="left:441px;width:20px;text-align:right;top:340.2px">M+D</div>
<div class="t mi" style="left:345px;top:369.6px">Cut With Profile</div><div class="t mk" style="left:441px;width:20px;text-align:right;top:369.7px">M+P</div>
</div>
</body></html>
